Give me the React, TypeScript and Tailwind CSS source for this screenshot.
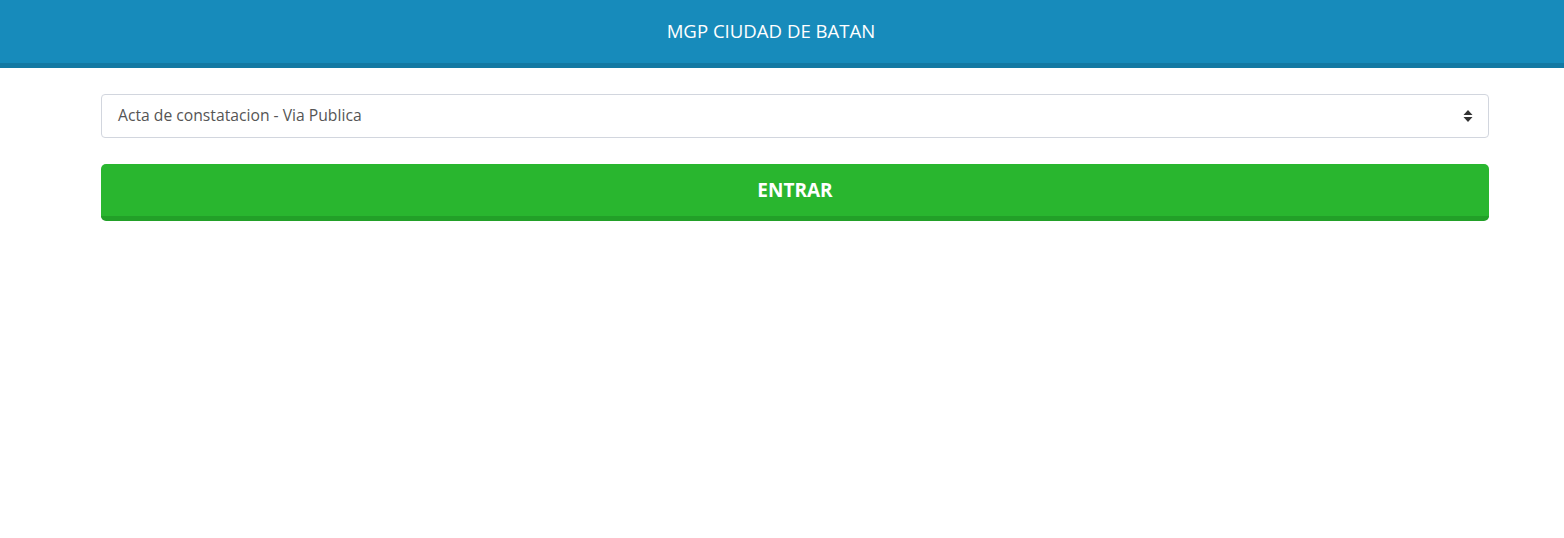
import React from "react";

export default function App() {
  return (
    <div className="min-h-[538px] bg-white" style={{ fontFamily: '"Open Sans", "Noto Sans", sans-serif' }}>
      <header className="h-[68px] bg-[#178bbb] border-b-[5px] border-[#1379a3] flex items-center justify-center pr-[22px]">
        <h1 className="text-white text-[18.6px] leading-none">MGP CIUDAD DE BATAN</h1>
      </header>
      <main className="pl-[101px] pr-[75px] pt-[26px] flex flex-col gap-[26px]">
        <div className="h-[44px] border border-[#d2d6de] rounded-[4px] flex items-center justify-between pl-[16px] pr-[16px]">
          <span className="text-[#555] text-[15.7px]">Acta de constatacion - Via Publica</span>
          <svg width="10" height="14" viewBox="0 0 10 14" className="mr-[-1px]">
            <path d="M5 1 L9.5 6 H0.5 Z" fill="#333" />
            <path d="M5 13 L9.5 8 H0.5 Z" fill="#333" />
          </svg>
        </div>
        <button className="h-[57px] bg-[#29b62f] border-b-[5px] border-[#22a028] rounded-[5px] flex items-center justify-center text-white font-bold text-[19px]">
          ENTRAR
        </button>
      </main>
    </div>
  );
}
